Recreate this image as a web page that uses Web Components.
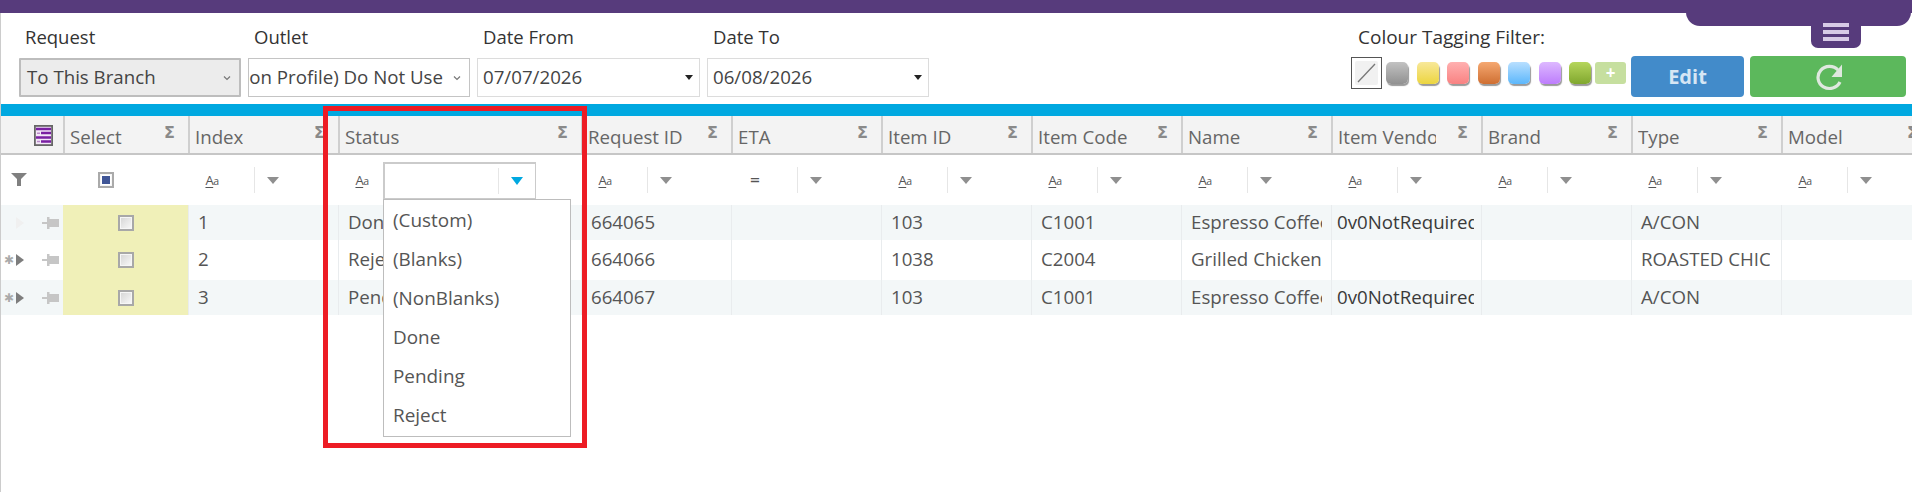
<!DOCTYPE html>
<html lang="en"><head><meta charset="utf-8"><title>Requests</title>
<style>
html,body{margin:0;padding:0;background:#fff;overflow:hidden;width:1912px;height:492px;font-family:"Open Sans","Noto Sans",sans-serif;font-size:18.7px;color:#444}
</style></head><body>
<x-app></x-app>
<script>
function def(name, css, html){
  customElements.define(name, class extends HTMLElement{
    constructor(){super();const s=this.attachShadow({mode:'open'});s.innerHTML='<style>'+css+'</style>'+(typeof html==='function'?'':html);}
    connectedCallback(){ if(typeof html==='function'&&!this._d){this._d=1;const t=document.createElement('div');t.innerHTML=html(this);while(t.firstChild)this.shadowRoot.appendChild(t.firstChild);} }
  });
}
def('x-topbar',`:host{display:block;height:13px;background:#573b7c;position:relative}
.tab{position:absolute;left:1686px;right:1px;top:0;height:26px;background:#573b7c;border-radius:0 0 14px 14px}
.menu{position:absolute;left:1811px;top:0;width:50px;height:48px;background:#573b7c;border-radius:0 0 7px 7px;display:flex;flex-direction:column;gap:3px;align-items:center;justify-content:flex-end;padding-bottom:7px;box-sizing:border-box}
.menu i{display:block;width:26px;height:4px;background:#d7cae6}`,
`<div class="tab"></div><div class="menu"><i></i><i></i><i></i></div>`);

def('x-field',`:host{display:block;flex:none}
.l{display:block;height:24px;line-height:24px;margin:0 0 9px 6px;color:#333;white-space:nowrap;font-size:18.500px}`,
x=>`<span class="l">${x.getAttribute('label')}</span><slot></slot>`);

def('x-select',`:host{display:flex;align-items:center;box-sizing:border-box;height:39px;border:1px solid #c4c4c4;background:#fff;color:#444;overflow:hidden;position:relative;padding-bottom:2px}
:host([grey]){background:#ececec;border:2px solid #bdbdbd;border-radius:1px}
.t{flex:1;min-width:0;overflow:hidden;white-space:nowrap;display:flex}
:host([grey]) .t{padding-left:6px}
:host([end]) .t{justify-content:flex-end}
svg{flex:none;margin:2px 8px 0 10px}`,
x=>`<span class="t"><span>${x.getAttribute('text')}</span></span><svg width="8" height="6" viewBox="0 0 8 6"><path d="M1 1.500l3 3 3-3" fill="none" stroke="#777" stroke-width="1.2"/></svg>`);

def('x-date',`:host{display:flex;align-items:center;box-sizing:border-box;height:39px;border:1px solid #dcdcdc;background:#fff;color:#444;padding:0 0 2px 5px;justify-content:space-between}
svg{margin:2px 6px 0 0}`,
x=>`<span>${x.getAttribute('text')}</span><svg width="8" height="5" viewBox="0 0 8 5"><path d="M0 0h8L4 5z" fill="#222"/></svg>`);

def('x-swatch',`:host{display:block;flex:none;width:22px;height:22px;border-radius:5px;box-shadow:1px 2px 1px #9a9a9a;background:linear-gradient(var(--a),var(--b))}`,``);

def('x-colour-filter',`:host{display:block;flex:none;width:275px}
.l{display:block;height:24px;line-height:24px;margin:0 0 8px 7px;color:#333;white-space:nowrap;font-size:19px}
.r{display:flex;align-items:center;height:32px}
.none{box-sizing:border-box;width:31px;height:32px;border:1px solid #555;padding:3px;margin-right:4px;flex:none}
.none svg{display:block;width:23px;height:24px;background:#f1f1f1;border-radius:2px}
.s{display:flex;gap:8.5px}
.add{box-sizing:border-box;flex:none;width:31px;height:22px;margin-left:4px;background:#c6df9f;border-radius:3px;color:#fff;font:bold 17px/21px "Open Sans",sans-serif;text-align:center}`,
`<span class="l">Colour Tagging Filter:</span><div class="r"><div class="none"><svg viewBox="0 0 23 24"><path d="M3 21L20 3" stroke="#777" stroke-width="1.3"/></svg></div><div class="s">
<x-swatch style="--a:#c2c2c2;--b:#919191"></x-swatch><x-swatch style="--a:#f8e89a;--b:#ecd53f"></x-swatch><x-swatch style="--a:#ffb0b0;--b:#f98282"></x-swatch><x-swatch style="--a:#f5a871;--b:#cf6f32"></x-swatch><x-swatch style="--a:#b8dfff;--b:#5cb7fb"></x-swatch><x-swatch style="--a:#ddb8ff;--b:#bd7dfc"></x-swatch><x-swatch style="--a:#b6d65c;--b:#80a72e"></x-swatch></div><span class="add">+</span></div>`);

def('x-btn',`:host{display:flex;flex:none;align-items:center;justify-content:center;height:41px;border-radius:4px;color:#d6e6f4;font-weight:700;font-size:20px;box-sizing:border-box;background:var(--bg)}`,`<slot></slot>`);

def('x-toolbar',`:host{display:flex;height:91px;box-sizing:border-box;padding:12px 6px 0 18px}
.f{display:flex;gap:7px}
.sp{flex:1}
.b{margin-top:31px;display:flex;gap:6px;margin-left:5px}`,
`<div class="f">
<x-field label="Request" style="width:222px"><x-select grey text="To This Branch"></x-select></x-field>
<x-field label="Outlet" style="width:222px"><x-select end text="(Common Profile) Do Not Use"></x-select></x-field>
<x-field label="Date From" style="width:223px"><x-date text="07/07/2026"></x-date></x-field>
<x-field label="Date To" style="width:222px"><x-date text="06/08/2026"></x-date></x-field>
</div><div class="sp"></div><x-colour-filter></x-colour-filter>
<div class="b"><x-btn style="--bg:#428bca;width:113px">Edit</x-btn>
<x-btn style="--bg:#5cb85c;width:156px"><svg width="30" height="28" viewBox="0 0 30 28"><path d="M25 7A11.500 11 0 1 0 27 19" fill="none" stroke="#dfe8df" stroke-width="3.200"/><path d="M29 1.500v12.500H18.500z" fill="#dfe8df"/></svg></x-btn></div>`);

def('x-head-cell',`:host{display:flex;flex:none;align-items:center;box-sizing:border-box;height:100%;border-left:2px solid #cfcfcf;padding-left:5px;position:relative;color:#666;overflow:hidden;padding-top:3px}
.t{flex:none;white-space:nowrap;overflow:hidden;max-width:calc(100% - 45px)}
.s{position:absolute;right:13px;top:7px;font:bold 16px/20px "DejaVu Sans",sans-serif;color:#8a8a8a}`,
x=>`<span class="t">${x.getAttribute('text')}</span><span class="s">Σ</span>`);

def('x-aa',`:host{display:block;flex:none;text-align:center;color:#555;font-size:13px;line-height:16px;white-space:nowrap;letter-spacing:-.5px}
u{text-decoration-thickness:1px;text-underline-offset:2px}small{font-size:10.500px}`,`<u>A</u><small>a</small>`);

def('x-filter-cell',`:host{display:flex;flex:none;align-items:center;box-sizing:border-box;height:100%}
x-aa,.eq{width:48px}
.eq{flex:none;text-align:center;color:#555;font:bold 13px/14px "DejaVu Sans",sans-serif}
.sep{flex:none;width:1px;height:26px;background:#e6e6e6;margin-left:18px}
.arr{flex:none;width:0;height:0;border:6px solid transparent;border-top:7px solid #8f8f8f;border-bottom:0;margin-left:12px}`,
x=>`${x.hasAttribute('eq')?'<span class="eq">=</span>':'<x-aa></x-aa>'}<span class="sep"></span><span class="arr"></span>`);

def('x-status-filter',`:host{display:flex;flex:none;align-items:center;box-sizing:border-box;height:100%;position:relative}
x-aa{width:45px;padding-left:3px;box-sizing:border-box}
.in{box-sizing:border-box;width:153px;height:38px;border:2px solid #cbcbcb;border-right-width:1px;display:flex;align-items:center;background:#fff;margin-top:1px}
.sep{width:1px;height:26px;background:#e6e6e6;margin-left:113px}
.arr{width:0;height:0;border:6.500px solid transparent;border-top:8px solid #00a8e0;border-bottom:0;margin-left:12px}
.pop{position:absolute;left:45px;top:44px;width:188px;height:238px;box-sizing:border-box;border:1px solid #bdbdbd;background:#fff;z-index:5;padding:2px 0 0 9px;color:#555;font-size:18.900px}
.pop div{height:39px;line-height:37px;white-space:nowrap}`,
`<x-aa></x-aa><div class="in"><span class="sep"></span><span class="arr"></span></div>
<div class="pop"><div>(Custom)</div><div>(Blanks)</div><div>(NonBlanks)</div><div>Done</div><div>Pending</div><div>Reject</div></div>`);

def('x-data-cell',`:host{display:block;flex:none;box-sizing:border-box;height:100%;border-left:1px solid #e9ecee;overflow:hidden;white-space:nowrap;color:#555}
.w{display:block;height:100%;line-height:calc(var(--h) - 2px);overflow:hidden}`,
x=>`<span class="w" style="padding-left:${x.getAttribute('pad')||9}px;margin-right:${x.getAttribute('mr')||9}px;color:${x.getAttribute('c')||'inherit'}">${x.getAttribute('text')||''}</span>`);

def('x-row-head',`:host{display:flex;flex:none;align-items:center;width:62px;height:100%;box-sizing:border-box;position:relative}
.star{position:absolute;left:3px;font:12px/14px "DejaVu Sans",sans-serif;color:#aaa}
.tri{position:absolute;left:15px;width:0;height:0;border:6px solid transparent;border-left:8px solid #7d7d7d;border-right:0}
:host([first]) .tri{border-left-color:#f0f0f0}
svg{position:absolute;left:40px}`,
x=>`${x.hasAttribute('first')?'':'<span class="star">✱</span>'}<span class="tri"></span><svg width="19" height="14" viewBox="0 0 19 14"><path d="M1 6h6v2H1zM6 1h2.500v12H6zM8 3h10v8H8z" fill="#c6c6c6"/></svg>`);

def('x-check',`:host{display:block;width:16px;height:16px;box-sizing:border-box;border:2px solid #a8a8a8;background:linear-gradient(135deg,#d4d4d4,#fafafa);box-shadow:inset 0 0 0 1px #f6f6f6;padding:2px;flex:none}
:host([on]){background:#fff;border-color:#aaa}
i{display:none;width:100%;height:100%;background:#3f5596}
:host([on]) i{display:block}`,`<i></i>`);

const W=[62,125,150,243,150,150,150,150,150,150,150,150,150,150];
const H=['Select','Index','Status','Request ID','ETA','Item ID','Item Code','Name','Item Vendor','Brand','Type','Model'];
const R=[
 ['1','Done','664065','','103','C1001','Espresso Coffee Machine','0v0NotRequired','','A/CON',''],
 ['2','Reject','664066','','1038','C2004','Grilled Chicken Sandwich','','','ROASTED CHICKEN',''],
 ['3','Pending','664067','','103','C1001','Espresso Coffee Machine','0v0NotRequired','','A/CON','']
];
const GH=[35,40,35];
def('x-grid',`:host{display:block;color:#555}
.r{display:flex;width:2000px}
.h{height:39px;background:#f3f3f3;border-bottom:2px solid #c6c6c6;box-sizing:border-box}
.f{height:50px;position:relative}
.c0{flex:none;width:62px;height:100%;display:flex;align-items:center;box-sizing:border-box;position:relative}
.fil{flex:none;position:absolute;left:10px;top:18px}
.ic{position:absolute;left:33px;top:9px}
.chk{flex:none;width:125px;height:100%;display:flex;align-items:center;box-sizing:border-box}
.d.alt{background:#f3f7f8}
.y{flex:none;width:125px;height:100%;background:#f0f0b8;display:flex;align-items:center;justify-content:center}
.d{position:relative}`,
()=>{
 let s='<div class="r h"><div class="c0"><svg class="ic" width="19" height="21" viewBox="0 0 19 21"><rect x=".9" y=".9" width="17.200" height="19.200" fill="#f3e7f7" stroke="#666" stroke-width="1.800"/><path d="M2 4h15M7 8h10M2 12.500h15M7 16.500h10" stroke="#7a1fa2" stroke-width="2.400"/><path d="M3 8.300h3M3 16.500h3" stroke="#b98ac9" stroke-width="1.400"/></svg></div>';
 H.forEach((t,i)=>{s+=`<x-head-cell text="${t}" style="width:${W[i+1]}px"></x-head-cell>`});
 s+='</div><div class="r f"><div class="c0"><svg class="fil" width="16" height="13" viewBox="0 0 16 13"><path d="M0 0h16l-6 6v7H6V6z" fill="#808080"/></svg></div><div class="chk" style="padding-left:35px"><x-check on></x-check></div>';
 H.slice(1).forEach((t,i)=>{
   if(t==='Status') s+=`<x-status-filter style="width:${W[i+2]}px"></x-status-filter>`;
   else s+=`<x-filter-cell ${t==='ETA'?'eq':''} style="width:${W[i+2]}px"></x-filter-cell>`;
 });
 s+='</div>';
 R.forEach((r,ri)=>{
  s+=`<div class="r d ${ri%2==0?'alt':''}" style="height:${GH[ri]}px;--h:${GH[ri]}px"><x-row-head ${ri==0?'first':''}></x-row-head><div class="y"><x-check></x-check></div>`;
  r.forEach((t,i)=>{
    const v=t.startsWith('0v0');
    const mr=v?7:(i==9?11:9);
    s+=`<x-data-cell text="${t}" mr="${mr}" ${v?`c="#3a3a3a" pad="5"`:''} style="width:${W[i+2]}px"></x-data-cell>`;
  });
  s+='</div>';
 });
 return s;
});

def('x-annotation',`:host{display:block;position:absolute;left:323px;top:106px;width:264px;height:342px;box-sizing:border-box;border:5px solid #ed1c24;pointer-events:none;z-index:9}`,``);

def('x-app',`:host{display:block;position:relative;width:1912px;height:492px;overflow:hidden}
.main{border-left:1px solid #ccc;height:479px;box-sizing:border-box;overflow:hidden}
.blue{height:12px;background:#00a8e0}`,
`<x-topbar></x-topbar><div class="main"><x-toolbar></x-toolbar><div class="blue"></div><x-grid></x-grid></div><x-annotation></x-annotation>`);
</script>
</body></html>
